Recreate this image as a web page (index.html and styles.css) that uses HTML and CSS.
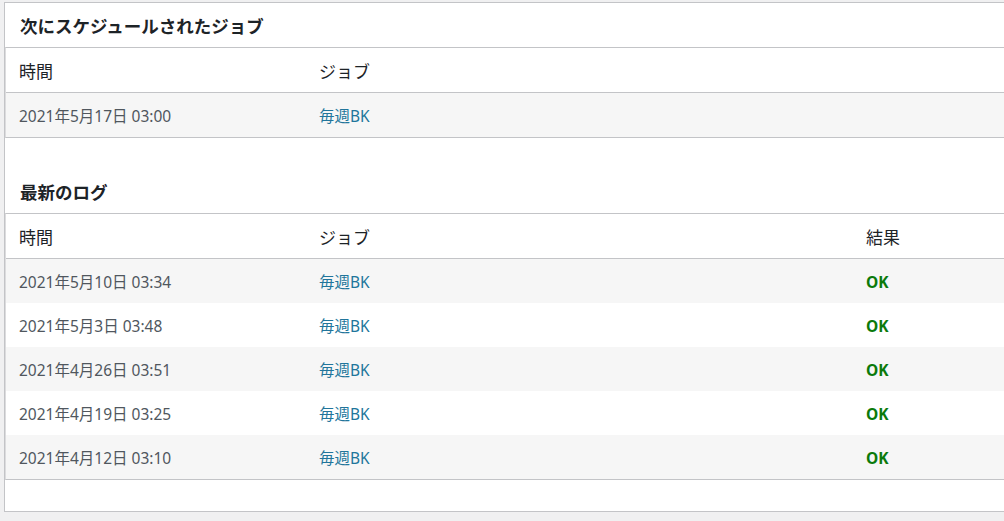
FILE: index.html
```html
<!DOCTYPE html>
<html lang="ja">
<head>
<meta charset="utf-8">
<title>ジョブ</title>
<link rel="stylesheet" href="styles.css">
</head>
<body>
<div class="card">
  <h2 class="card-title">次にスケジュールされたジョブ</h2>
  <table class="widefat">
    <thead>
      <tr><th class="col-time">時間</th><th class="col-job">ジョブ</th><th class="col-rest"></th></tr>
    </thead>
    <tbody>
      <tr class="alt"><td>2021年5月17日 03:00</td><td><a href="#">毎週BK</a></td><td></td></tr>
    </tbody>
  </table>
  <div class="spacer"></div>
  <h2 class="card-title">最新のログ</h2>
  <table class="widefat">
    <thead>
      <tr><th class="col-time">時間</th><th class="col-job">ジョブ</th><th class="col-rest">結果</th></tr>
    </thead>
    <tbody>
      <tr class="alt"><td>2021年5月10日 03:34</td><td><a href="#">毎週BK</a></td><td class="ok">OK</td></tr>
      <tr><td>2021年5月3日 03:48</td><td><a href="#">毎週BK</a></td><td class="ok">OK</td></tr>
      <tr class="alt"><td>2021年4月26日 03:51</td><td><a href="#">毎週BK</a></td><td class="ok">OK</td></tr>
      <tr><td>2021年4月19日 03:25</td><td><a href="#">毎週BK</a></td><td class="ok">OK</td></tr>
      <tr class="alt"><td>2021年4月12日 03:10</td><td><a href="#">毎週BK</a></td><td class="ok">OK</td></tr>
    </tbody>
  </table>
  <div class="bottom-space"></div>
</div>
</body>
</html>
```

FILE: styles.css
```css
html, body {
  margin: 0;
  padding: 0;
  background: #f0f0f1;
  overflow: hidden;
}
body {
  font-family: "Segoe UI", "Noto Sans", "Noto Sans CJK JP", sans-serif;
  color: #1d2327;
  padding: 2px 0 0 4px;
}
.card {
  width: 1030px;
  background: #fff;
  border: 1px solid #c3c4c7;
  box-sizing: border-box;
}
.card-title {
  margin: 0;
  height: 44px;
  box-sizing: border-box;
  padding: 2px 0 0 15px;
  font-size: 17.5px;
  font-weight: 700;
  line-height: 42px;
  color: #1d2327;
}
.widefat {
  width: 100%;
  border-collapse: separate;
  border-spacing: 0;
  border-top: 1px solid #c3c4c7;
  border-bottom: 1px solid #c3c4c7;
  border-left: 1px solid #dcdcde;
}
.widefat th, .widefat td {
  height: 44px;
  box-sizing: content-box;
  padding: 0 0 0 13px;
  text-align: left;
  vertical-align: middle;
}
.widefat th {
  font-weight: 400;
  font-size: 17px;
  color: #1d2327;
  border-bottom: 1px solid #c3c4c7;
  padding-top: 1px;
  height: 43px;
}
.widefat td {
  font-size: 15.5px;
  color: #50575e;
  padding-top: 1px;
  height: 43px;
}
.col-time { width: 287px; }
.col-job { width: 534px; }
.widefat tr.alt td { background: #f6f6f6; }
.widefat a {
  color: #21759b;
  text-decoration: none;
}
.widefat td.ok {
  color: #0b7a0b;
  font-weight: 700;
}
.spacer { height: 31px; }
.bottom-space { height: 31px; }
```
